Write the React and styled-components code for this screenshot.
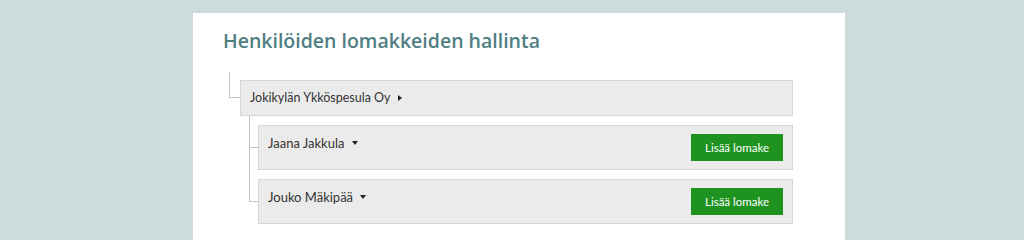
import React from 'react';
import styled, { createGlobalStyle } from 'styled-components';

const GlobalStyle = createGlobalStyle`
	body {
		margin: 0;
		background-color: #ccdcdc;
		font-family: Lato, "Open Sans", sans-serif;
		color: #333;
	}
`;

const Page = styled.div`
	padding-top: 13px;
`;

const Card = styled.div`
	width: 652px;
	margin: 0 auto 0 193px;
	background-color: white;
	padding: 14px 52px 40px 30px;
	box-sizing: border-box;
`;

const Title = styled.h1`
	margin: 0;
	font-family: "Open Sans", sans-serif;
	font-size: 19.5px;
	font-weight: 600;
	line-height: 28px;
	color: #4f7e83;
`;

const Tree = styled.ul`
	list-style: none;
	margin: 17px 0 0 6px;
	padding: 0;
`;

const Children = styled.ul`
	list-style: none;
	margin: 0 0 0 9px;
	padding: 0;
	position: relative;
`;

const Node = styled.li`
	position: relative;
	padding-top: ${p => p.$gap}px;
	padding-left: ${p => p.$indent}px;

	&::before {
		content: '';
		position: absolute;
		left: 0;
		top: 0;
		width: ${p => p.$indent}px;
		height: ${p => p.$gap + p.$mid}px;
		border-left: 1px solid #c4c4c4;
		border-bottom: 1px solid #c4c4c4;
		box-sizing: border-box;
	}

	&:not(:last-child)::after {
		content: '';
		position: absolute;
		left: 0;
		top: 0;
		bottom: 0;
		border-left: 1px solid #c4c4c4;
	}
`;

const Box = styled.div`
	display: flex;
	align-items: flex-start;
	justify-content: space-between;
	background-color: #ebebeb;
	border: 1px solid #d6d6d6;
	padding: 8px 9px;
	font-size: ${p => p.$size || 13}px;
	line-height: 18px;
`;

const Name = styled.span`
	display: inline-flex;
	align-items: center;
	gap: 7px;
`;

const Caret = styled.span`
	width: 0;
	height: 0;
	border-style: solid;
	border-color: transparent;
	${p => p.$open
		? 'border-width: 4px 3.5px 0 3.5px; border-top-color: #222;'
		: 'border-width: 3.5px 0 3.5px 4px; border-left-color: #222;'}
`;

const AddButton = styled.button`
	height: 27px;
	width: 92px;
	border: none;
	background-color: #1f931f;
	color: white;
	font-family: inherit;
	font-size: 11.5px;
	padding: 0;
	cursor: pointer;
`;

const people = ['Jaana Jakkula', 'Jouko Mäkipää'];

const App = () => (
	<Page>
		<GlobalStyle />
		<Card>
			<Title>Henkilöiden lomakkeiden hallinta</Title>
			<Tree>
				<Node $gap={8} $mid={18} $indent={11}>
					<Box $size={12.5}>
						<Name>Jokikylän Ykköspesula Oy <Caret /></Name>
					</Box>
					<Children>
						{people.map(name => (
							<Node key={name} $gap={9} $mid={23} $indent={9}>
								<Box>
									<Name>{name} <Caret $open /></Name>
									<AddButton>Lisää lomake</AddButton>
								</Box>
							</Node>
						))}
					</Children>
				</Node>
			</Tree>
		</Card>
	</Page>
);

export default App;
